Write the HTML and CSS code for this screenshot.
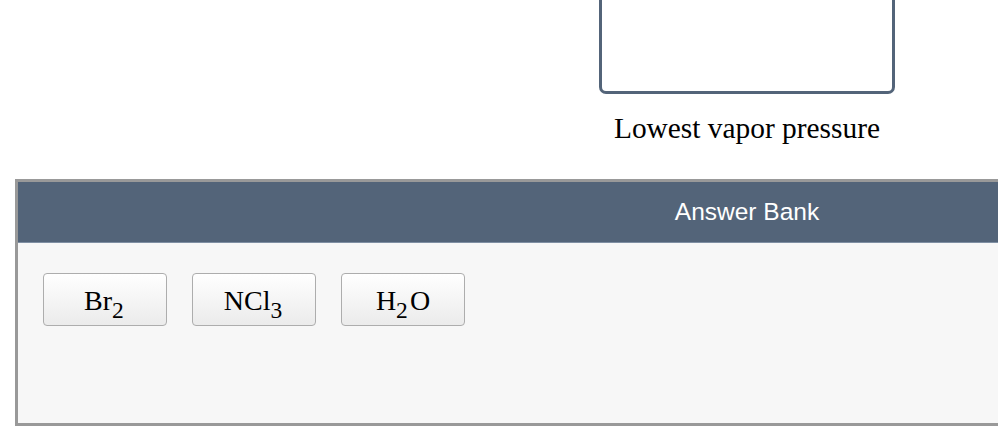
FILE: index.html
```html
<!DOCTYPE html>
<html lang="en">
<head>
<meta charset="utf-8">
<title>Rank by vapor pressure</title>
<link rel="stylesheet" href="styles.css">
</head>
<body>
<div class="page">
  <section class="rank">
    <div class="drop-slot"></div>
    <p class="slot-label">Lowest vapor pressure</p>
  </section>

  <section class="bank">
    <header class="bank-head">Answer Bank</header>
    <div class="bank-body">
      <button class="chip" type="button"><span class="formula">Br<sub>2</sub></span></button>
      <button class="chip" type="button"><span class="formula">NCl<sub>3</sub></span></button>
      <button class="chip" type="button"><span class="formula">H<sub>2</sub>O</span></button>
    </div>
  </section>
</div>
</body>
</html>
```

FILE: styles.css
```css
html, body {
  margin: 0;
  padding: 0;
  overflow: hidden;
  background: #ffffff;
}

.page {
  width: 1494px;
  font-family: "Liberation Serif", "Times New Roman", serif;
  color: #000000;
}

/* ranking column: drop target with its caption */
.rank {
  display: flex;
  flex-direction: column;
  align-items: center;
}

.drop-slot {
  box-sizing: border-box;
  width: 296px;
  height: 124px;
  margin-top: -30px;
  border: 3px solid #536479;
  border-radius: 7px;
  background: #ffffff;
}

.slot-label {
  margin: 16px 0 0;
  font-size: 29.4px;
  line-height: 36px;
}

/* answer bank panel */
.bank {
  margin: 33px 15px 0;
  border: 3px solid #999999;
  background: #f7f7f7;
}

.bank-head {
  height: 60px;
  line-height: 60px;
  text-align: center;
  background: #536479;
  border-bottom: 1px solid #7f8fa3;
  color: #ffffff;
  font-family: "Liberation Sans", Arial, sans-serif;
  font-size: 24.5px;
}

.bank-body {
  display: flex;
  gap: 25px;
  height: 180px;
  box-sizing: border-box;
  padding: 30px 25px;
  align-items: flex-start;
}

.chip {
  box-sizing: border-box;
  width: 124px;
  height: 53px;
  padding: 0;
  display: flex;
  align-items: center;
  justify-content: center;
  border: 1px solid #adadad;
  border-radius: 4px;
  background: linear-gradient(#ffffff, #ebebeb);
  font-family: "Liberation Serif", "Times New Roman", serif;
  font-size: 28px;
  line-height: 1;
  color: #000000;
}

.formula {
  display: block;
  line-height: 1;
  padding-top: 2px;
}

.formula sub {
  font-size: 0.84em;
  line-height: 0;
  vertical-align: -0.36em;
  margin-right: 2px;
}
```
